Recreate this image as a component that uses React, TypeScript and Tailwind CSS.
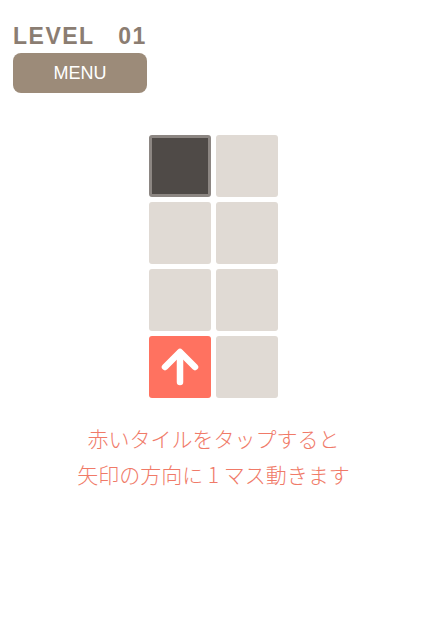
import React from 'react';

type Tile = 'dark' | 'light' | 'red';

const grid: Tile[][] = [
    ['dark', 'light'],
    ['light', 'light'],
    ['light', 'light'],
    ['red', 'light'],
];

const ArrowUp: React.FC = () => (
    <svg width="40" height="40" viewBox="0 0 40 40" fill="none" stroke="white" strokeWidth="6.5" strokeLinecap="round" strokeLinejoin="round">
        <path d="M20 35 V6" />
        <path d="M5 20 L20 5 L35 20" />
    </svg>
);

const TileBox: React.FC<{ kind: Tile }> = ({ kind }) => {
    if (kind === 'dark') {
        return <div className="w-[62px] h-[62px] rounded-[3px] bg-[#4f4a47] border-[3px] border-[#8c8682]" />;
    }
    if (kind === 'red') {
        return (
            <div className="w-[62px] h-[62px] rounded-[3px] bg-[#ff7260] flex items-center justify-center">
                <ArrowUp />
            </div>
        );
    }
    return <div className="w-[62px] h-[62px] rounded-[3px] bg-[#e0dad4]" />;
};

const App: React.FC = () => {
    return (
        <div className="w-[427px] h-[640px] bg-white relative" style={{ fontFamily: '"Noto Sans CJK JP", "Noto Sans", sans-serif' }}>
            <div className="pt-[22px] pl-[13px]">
                <div className="text-[23px] leading-[28px] font-bold tracking-[1.5px] text-[#8b7d72]" style={{ fontFamily: '"Liberation Sans", sans-serif' }}>
                    LEVEL&nbsp;&nbsp;&nbsp;01
                </div>
                <button className="mt-[3px] w-[134px] h-[40px] rounded-[8px] bg-[#9c8b79] text-white text-[18px] flex items-center justify-center" style={{ fontFamily: '"Liberation Sans", sans-serif' }}>
                    MENU
                </button>
            </div>

            <div className="mt-[42px] flex justify-center">
                <div className="flex flex-col gap-[5px]">
                    {grid.map((row, i) => (
                        <div key={i} className="flex gap-[5px]">
                            {row.map((t, j) => (
                                <TileBox key={j} kind={t} />
                            ))}
                        </div>
                    ))}
                </div>
            </div>

            <div className="mt-[22px] text-center text-[#f07a68] text-[21px] leading-[36px] font-light">
                <div>赤いタイルをタップすると</div>
                <div>矢印の方向に&nbsp;1&nbsp;マス動きます</div>
            </div>
        </div>
    );
};

export default App;
